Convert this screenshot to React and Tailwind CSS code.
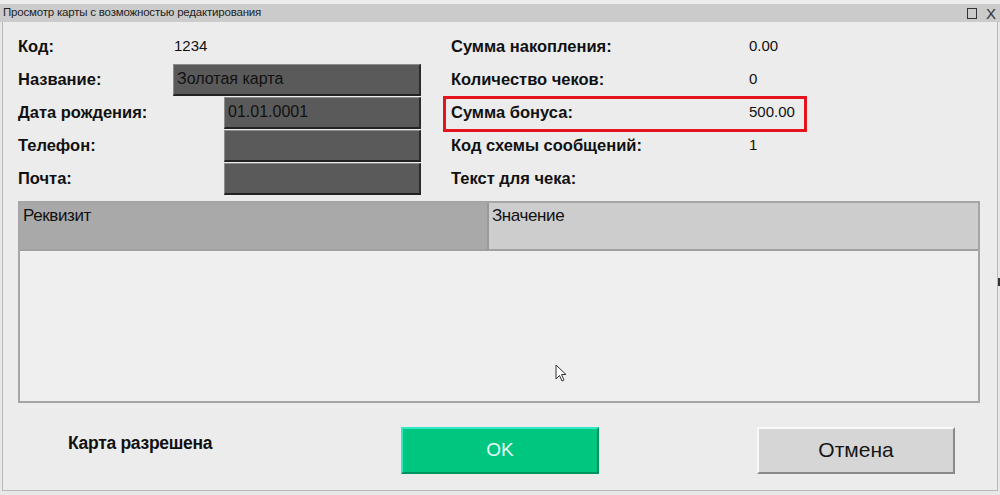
const labelCls = "font-bold text-[16.5px] text-[#111]";
const boxCls =
  "h-[32px] w-[197px] bg-[#5a5a5a] border-t border-l border-[#8c8c8c] border-b-2 border-r-2 border-b-[#222] border-r-[#2a2a2a] flex items-center pl-[3px] text-[16px] text-[#111]";

function LeftRow({ label, children }) {
  return (
    <div className="h-[33px] flex items-center">
      <div className={`${labelCls} w-[155px] shrink-0`}>{label}</div>
      {children}
    </div>
  );
}

function RightRow({ label, value, marked }) {
  return (
    <div className="h-[33px] flex items-center relative">
      <div className={`${labelCls} w-[298px]`}>{label}</div>
      <div className="text-[15px] text-[#111]">{value}</div>
      {marked && (
        <div className="absolute left-[-8px] top-[0px] w-[364px] h-[36px] border-[3px] border-[#e5131d]" />
      )}
    </div>
  );
}

export default function App() {
  return (
    <div
      className="w-[1000px] h-[495px] bg-[#e8e8e8] overflow-hidden relative"
      style={{ fontFamily: '"Liberation Sans", Arial, sans-serif' }}
    >
      <div className="h-[4px] bg-[#ececec]" />
      <div className="h-[18px] bg-[#cbcbcb] flex items-center justify-between pl-[3px] pr-[4px]">
        <span className="text-[11.5px] text-[#222] tracking-[-0.2px]">
          Просмотр карты с возможностью редактирования
        </span>
        <div className="flex items-center gap-[9px]">
          <div className="w-[10px] h-[11px] border-[1.5px] border-[#333]" />
          <span className="text-[15px] leading-none text-[#333]">X</span>
        </div>
      </div>

      <div className="mx-[2px] h-[469px] bg-[#ececec] border-x border-b border-[#b8b8b8] relative">
        <div className="flex pt-[8px]">
          <div className="pl-[15px] w-[431px]">
            <LeftRow label="Код:">
              <div className="ml-[1px] text-[15px] text-[#111]">1234</div>
            </LeftRow>
            <LeftRow label="Название:">
              <div className={`${boxCls} w-[248px]`}>Золотая карта</div>
            </LeftRow>
            <LeftRow label="Дата рождения:">
              <div className={`${boxCls} ml-[51px]`}>01.01.0001</div>
            </LeftRow>
            <LeftRow label="Телефон:">
              <div className={`${boxCls} ml-[51px]`} />
            </LeftRow>
            <LeftRow label="Почта:">
              <div className={`${boxCls} ml-[51px]`} />
            </LeftRow>
          </div>
          <div className="pl-[17px] flex-1">
            <RightRow label="Сумма накопления:" value="0.00" />
            <RightRow label="Количество чеков:" value="0" />
            <RightRow label="Сумма бонуса:" value="500.00" marked />
            <RightRow label="Код схемы сообщений:" value="1" />
            <RightRow label="Текст для чека:" value="" />
          </div>
        </div>

        <div className="ml-[15px] mt-[6px] w-[962px] h-[202px] border-2 border-[#a5a5a5] flex flex-col">
          <div className="h-[48px] flex border-b-2 border-[#a0a0a0] text-[17px] text-[#111] tracking-[-0.4px]">
            <div className="w-[469px] bg-[#a9a9a9] border-r-2 border-[#999] pl-[3px]">Реквизит</div>
            <div className="flex-1 bg-[#cdcdcd] pl-[3px]">Значение</div>
          </div>
          <div className="flex-1 bg-[#efefef] relative">
            <svg
              className="absolute left-[535px] top-[113px]"
              width="13"
              height="19"
              viewBox="0 0 13 19"
            >
              <path
                d="M1 1 L1 15 L4.5 11.5 L7 17 L9 16 L6.5 10.5 L11 10.5 Z"
                fill="#fff"
                stroke="#333"
                strokeWidth="1"
              />
            </svg>
          </div>
        </div>

        <div className="flex items-center h-[88px] pt-[6px]">
          <div className="ml-[65px] w-[333px] font-bold text-[17.5px] text-[#111] tracking-[-0.3px] mt-[-14px]">
            Карта разрешена
          </div>
          <div className="w-[198px] h-[47px] bg-[#00c67f] border-t-2 border-l-2 border-[#2fe8c4] border-b-2 border-r-2 border-b-[#00935d] border-r-[#00935d] flex items-center justify-center text-[19px] text-[#e8fff6]">
            OK
          </div>
          <div className="ml-[158px] w-[198px] h-[47px] bg-[#d6d6d6] border-t-2 border-l-2 border-[#f8f8f8] border-b-2 border-r-2 border-b-[#8a8a8a] border-r-[#8a8a8a] flex items-center justify-center text-[21px] text-[#151515]">
            Отмена
          </div>
        </div>
      </div>
      <div className="absolute right-0 top-[278px] w-[2px] h-[8px] bg-[#333]" />
    </div>
  );
}
